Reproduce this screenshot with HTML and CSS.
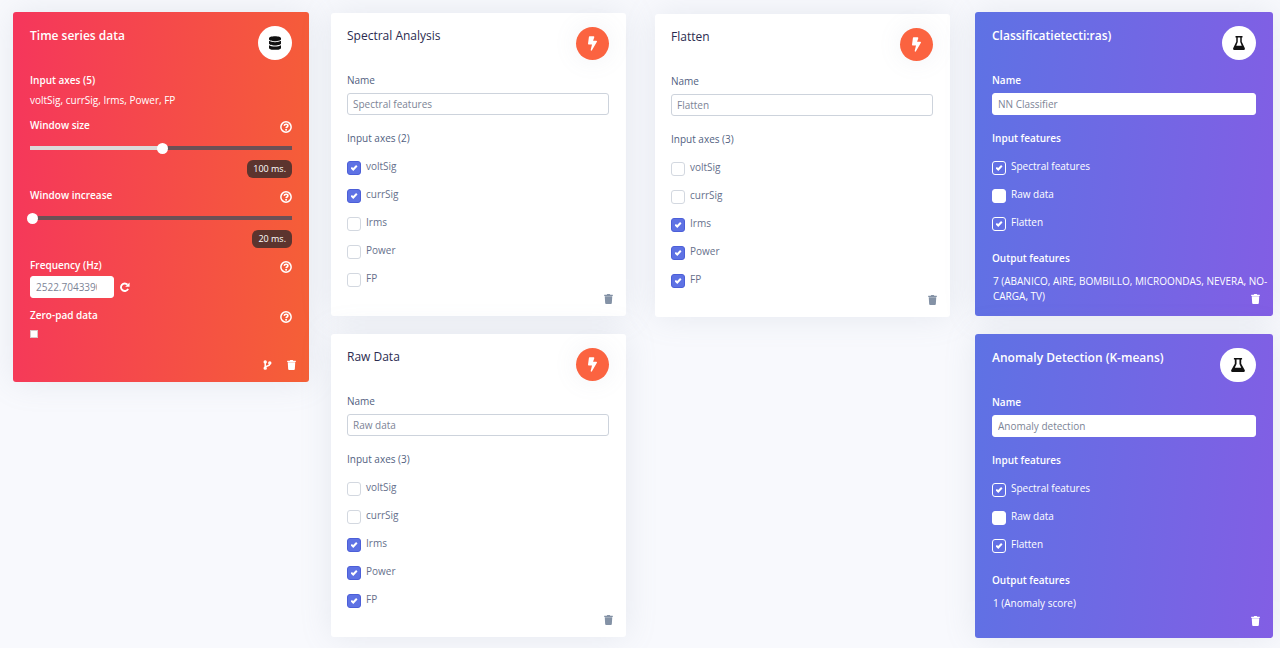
FILE: index.html
```html
<!DOCTYPE html>
<html lang="en">
<head>
<meta charset="utf-8">
<title>Impulse design</title>
<link rel="stylesheet" href="styles.css">
</head>
<body>
<svg class="sprite" aria-hidden="true">
  <symbol id="bolt" viewBox="0 0 320 512"><path d="M296 160H180.600l42.600-129.800C227.200 15 215.700 0 200 0H56C44 0 33.800 8.900 32.200 20.800l-32 240C-1.700 275.200 9.500 288 24 288h118.700L96.600 482.500c-3.600 15.200 8 29.500 23.300 29.500 8.400 0 16.400-4.400 20.800-12l176-304c9.300-15.900-2.200-36-20.700-36z"/></symbol>
  <symbol id="trash" viewBox="0 0 448 512"><path d="M432 32H312l-9.400-18.700A24 24 0 0 0 281.100 0H166.800a23.720 23.720 0 0 0-21.400 13.300L136 32H16A16 16 0 0 0 0 48v32a16 16 0 0 0 16 16h416a16 16 0 0 0 16-16V48a16 16 0 0 0-16-16zM32 110l21.200 357a48 48 0 0 0 47.900 45h245.800a48 48 0 0 0 47.900-45L416 110z"/></symbol>
  <symbol id="database" viewBox="0 0 448 512"><path d="M448 73.143v45.714C448 159.143 347.667 192 224 192S0 159.143 0 118.857V73.143C0 32.857 100.333 0 224 0s224 32.857 224 73.143zM448 176v102.857C448 319.143 347.667 352 224 352S0 319.143 0 278.857V176c48.125 33.143 136.208 48.572 224 48.572S399.874 209.143 448 176zm0 160v102.857C448 479.143 347.667 512 224 512S0 479.143 0 438.857V336c48.125 33.143 136.208 48.572 224 48.572S399.874 369.143 448 336z"/></symbol>
  <symbol id="flask" viewBox="0 0 24 28" preserveAspectRatio="none"><path fill-rule="evenodd" d="M5 0h14v3h-1.500v8.500l6 12.500C24.500 26.500 23 28 21 28H3c-2 0-3.500-1.500-2.500-4L6.500 11.500V3H5zM9.500 3v9l-3 7.500h11l-3-7.500V3z"/></symbol>
  <symbol id="help" viewBox="0 0 24 24"><g fill="none" stroke="currentColor"><circle cx="12" cy="12" r="10.300" stroke-width="3"/><path d="M8.300 9.500c.4-2 1.900-3 3.800-3 2.100 0 3.700 1.200 3.700 3.100 0 2.300-3.500 2.500-3.500 4.600" stroke-width="3.200"/></g><circle cx="12.200" cy="17.400" r="2"/></symbol>
  <symbol id="redo" viewBox="0 0 24 24"><path fill="none" stroke="currentColor" stroke-width="4.500" d="M19.500 16.500A9 9 0 1 1 18 6.500"/><path d="M23 1v10.500H12.500z"/></symbol>
  <symbol id="branch" viewBox="0 0 20 24"><g fill="none" stroke="currentColor" stroke-width="3.600"><circle cx="4.500" cy="4.500" r="2.300"/><circle cx="4.500" cy="19.500" r="2.300"/><circle cx="15.500" cy="7" r="2.300"/><path d="M4.500 7v10M15.500 9.500c0 5-6 4-10.500 6.500"/></g></symbol>
</svg>

<main class="board">
  <section class="column">
    <article class="card card-red">
      <header class="card-head"><h2 class="title">Time series data</h2><span class="badge badge-white"><svg class="icon-database"><use href="#database"/></svg></span></header>
      <h3 class="label">Input axes (5)</h3>
      <p class="axes">voltSig, currSig, Irms, Power, FP</p>
      <div class="label-row"><label class="label" for="window-size">Window size</label><button class="help" type="button" aria-label="Help"><svg><use href="#help"/></svg></button></div>
      <input class="slider" id="window-size" type="range" min="0" max="100" value="51" style="--fill:51%">
      <output class="pill" for="window-size">100 ms.</output>
      <div class="label-row"><label class="label" for="window-increase">Window increase</label><button class="help" type="button" aria-label="Help"><svg><use href="#help"/></svg></button></div>
      <input class="slider" id="window-increase" type="range" min="0" max="100" value="0" style="--fill:0%">
      <output class="pill" for="window-increase">20 ms.</output>
      <div class="label-row"><label class="label" for="frequency">Frequency (Hz)</label><button class="help" type="button" aria-label="Help"><svg><use href="#help"/></svg></button></div>
      <div class="frequency-row"><input class="field field-short" id="frequency" type="text" value="2522.7043390"><button class="redo" type="button" aria-label="Reset frequency"><svg><use href="#redo"/></svg></button></div>
      <div class="label-row"><label class="label" for="zero-pad">Zero-pad data</label><button class="help" type="button" aria-label="Help"><svg><use href="#help"/></svg></button></div>
      <input class="mini-check" id="zero-pad" type="checkbox">
      <div class="actions"><button type="button" aria-label="Create version"><svg><use href="#branch"/></svg></button><button type="button" aria-label="Delete"><svg><use href="#trash"/></svg></button></div>
    </article>
  </section>

  <section class="column column-dsp">
    <article class="card card-light">
      <header class="card-head"><h2 class="title">Spectral Analysis</h2><span class="badge badge-orange"><svg class="icon-bolt"><use href="#bolt"/></svg></span></header>
      <label class="label" for="spectral-name">Name</label>
      <input class="field" id="spectral-name" type="text" value="Spectral features">
      <h3 class="label">Input axes (2)</h3>
      <div class="checks">
        <label class="check"><input type="checkbox" checked><span>voltSig</span></label>
        <label class="check"><input type="checkbox" checked><span>currSig</span></label>
        <label class="check"><input type="checkbox"><span>Irms</span></label>
        <label class="check"><input type="checkbox"><span>Power</span></label>
        <label class="check"><input type="checkbox"><span>FP</span></label>
      </div>
      <div class="actions"><button type="button" aria-label="Delete"><svg><use href="#trash"/></svg></button></div>
    </article>
    <article class="card card-light">
      <header class="card-head"><h2 class="title">Raw Data</h2><span class="badge badge-orange"><svg class="icon-bolt"><use href="#bolt"/></svg></span></header>
      <label class="label" for="raw-name">Name</label>
      <input class="field" id="raw-name" type="text" value="Raw data">
      <h3 class="label">Input axes (3)</h3>
      <div class="checks">
        <label class="check"><input type="checkbox"><span>voltSig</span></label>
        <label class="check"><input type="checkbox"><span>currSig</span></label>
        <label class="check"><input type="checkbox" checked><span>Irms</span></label>
        <label class="check"><input type="checkbox" checked><span>Power</span></label>
        <label class="check"><input type="checkbox" checked><span>FP</span></label>
      </div>
      <div class="actions"><button type="button" aria-label="Delete"><svg><use href="#trash"/></svg></button></div>
    </article>
  </section>

  <section class="column column-flatten">
    <article class="card card-light">
      <header class="card-head"><h2 class="title">Flatten</h2><span class="badge badge-orange"><svg class="icon-bolt"><use href="#bolt"/></svg></span></header>
      <label class="label" for="flatten-name">Name</label>
      <input class="field" id="flatten-name" type="text" value="Flatten">
      <h3 class="label">Input axes (3)</h3>
      <div class="checks">
        <label class="check"><input type="checkbox"><span>voltSig</span></label>
        <label class="check"><input type="checkbox"><span>currSig</span></label>
        <label class="check"><input type="checkbox" checked><span>Irms</span></label>
        <label class="check"><input type="checkbox" checked><span>Power</span></label>
        <label class="check"><input type="checkbox" checked><span>FP</span></label>
      </div>
      <div class="actions"><button type="button" aria-label="Delete"><svg><use href="#trash"/></svg></button></div>
    </article>
  </section>

  <section class="column column-learn">
    <article class="card card-purple">
      <header class="card-head"><h2 class="title">Classificatietecti:ras)</h2><span class="badge badge-white"><svg class="icon-flask"><use href="#flask"/></svg></span></header>
      <label class="label" for="classifier-name">Name</label>
      <input class="field" id="classifier-name" type="text" value="NN Classifier">
      <h3 class="label">Input features</h3>
      <div class="checks">
        <label class="check"><input type="checkbox" checked><span>Spectral features</span></label>
        <label class="check"><input type="checkbox"><span>Raw data</span></label>
        <label class="check"><input type="checkbox" checked><span>Flatten</span></label>
      </div>
      <h3 class="label label-output">Output features</h3>
      <p class="outputs">7 (ABANICO, AIRE, BOMBILLO, MICROONDAS, NEVERA, NO-CARGA, TV)</p>
      <div class="actions"><button type="button" aria-label="Delete"><svg><use href="#trash"/></svg></button></div>
    </article>
    <article class="card card-purple">
      <header class="card-head"><h2 class="title">Anomaly Detection (K-means)</h2><span class="badge badge-white badge-wide"><svg class="icon-flask icon-flask-wide"><use href="#flask"/></svg></span></header>
      <label class="label" for="anomaly-name">Name</label>
      <input class="field" id="anomaly-name" type="text" value="Anomaly detection">
      <h3 class="label">Input features</h3>
      <div class="checks">
        <label class="check"><input type="checkbox" checked><span>Spectral features</span></label>
        <label class="check"><input type="checkbox"><span>Raw data</span></label>
        <label class="check"><input type="checkbox" checked><span>Flatten</span></label>
      </div>
      <h3 class="label label-output">Output features</h3>
      <p class="outputs">1 (Anomaly score)</p>
      <div class="actions"><button type="button" aria-label="Delete"><svg><use href="#trash"/></svg></button></div>
    </article>
  </section>
</main>
</body>
</html>
```
FILE: styles.css
```css
* { box-sizing: border-box; }

body {
  margin: 0;
  background: #f8f9fd;
  color: #525f7f;
  font-family: "Open Sans", "Noto Sans", sans-serif;
  font-size: 10px;
  line-height: 14px;
}

h2, h3, p { margin: 0; }
button { padding: 0; border: 0; background: none; color: inherit; line-height: 0; }
svg { display: block; fill: currentColor; }
.sprite { position: absolute; width: 0; height: 0; }

.board {
  display: grid;
  grid-template-columns: 296fr 317fr 324fr 323fr;
  align-items: start;
  padding: 12px 7px 10px 13px;
}
.column { display: flex; flex-direction: column; gap: 18px; }
.column-dsp { padding: 1px 0 0 22px; }
.column-flatten { padding: 2px 0 0 29px; }
.column-learn { padding-left: 25px; }

.card {
  position: relative;
  display: flex;
  flex-direction: column;
  padding: 14px 17px 22px 16px;
  border-radius: 3px;
  box-shadow: 0 0 32px rgba(136, 152, 170, 0.16);
}
.card-light { background: #fff; }
.card-red {
  padding: 14px 17px 44px;
  background: linear-gradient(95deg, #f5365c, #f56036);
  color: #fff;
}
.card-purple {
  min-height: 304px;
  padding: 14px 17px 12px;
  background: linear-gradient(95deg, #5e72e4, #825ee4);
  color: #fff;
}

.card-head { display: flex; justify-content: space-between; align-items: flex-start; height: 34px; margin-bottom: 13px; }
.card-light .card-head { height: 33px; }
.title { font-size: 12px; line-height: 20px; font-weight: 600; }
.card-light .title { color: #2b2b50; line-height: 18px; font-weight: 500; }

.badge {
  display: grid;
  place-items: center;
  flex: none;
  width: 34px;
  height: 34px;
  border-radius: 17px;
}
.badge-white { background: #fff; color: #111; }
.badge-orange { width: 33px; height: 33px; background: #fb6340; color: #fff; box-shadow: 0 0 24px rgba(136, 152, 170, 0.12); }
.badge-wide { width: 36px; }
.icon-database { width: 12px; height: 14px; }
.icon-bolt { width: 9px; height: 15px; }
.icon-flask { width: 12px; height: 14px; }
.icon-flask-wide { width: 14px; }

.label { font-size: 10px; line-height: 14px; font-weight: 600; }
.card-light .label { font-weight: 500; }
.axes { margin: 6px 0 11px; }

.field {
  width: 100%;
  height: 22px;
  margin: 6px 0 16px;
  padding: 0 5px;
  border: 1px solid #cdd3dc;
  border-radius: 3px;
  background: #fff;
  color: #7c8496;
  font: 10px/14px "Open Sans", "Noto Sans", sans-serif;
}
.card-purple .field, .card-red .field { border-color: #fff; }

.checks { display: grid; grid-auto-rows: 28px; margin-top: 9px; }
.check { display: flex; align-items: center; gap: 5px; }
.check span { padding-bottom: 4px; }
.card-light .check { color: #66708c; }
.check input {
  appearance: none;
  display: grid;
  place-items: center;
  width: 14px;
  height: 14px;
  margin: 0;
  border: 1px solid #d3d8e0;
  border-radius: 3px;
  background: #fff;
}
.check input:checked { border-color: #4c5fd8; background: #5e72e4; }
.card-purple .check input { border-color: #fff; }
.card-purple .check input:checked { background: transparent; }
.check input:checked::after {
  content: "";
  width: 7px;
  height: 6px;
  background: #fff;
  clip-path: polygon(0 54%, 20% 32%, 38% 52%, 80% 2%, 100% 24%, 40% 98%);
}

.label-output { margin-top: 13px; }
.outputs { margin: 9px -14px 0 1px; line-height: 15px; }

.label-row { display: flex; justify-content: space-between; align-items: flex-start; height: 15px; }
.help { padding-top: 3px; }
.help svg { width: 12px; height: 12px; }

.slider {
  appearance: none;
  width: calc(100% + 3px);
  height: 12px;
  margin: 9px 0 6px -3px;
  background: transparent;
}
.slider::-webkit-slider-runnable-track {
  height: 11px;
  background: linear-gradient(90deg, #dcd9d9 var(--fill), #6b5055 var(--fill)) right center / calc(100% - 3px) 4px no-repeat;
}
.slider::-webkit-slider-thumb {
  appearance: none;
  width: 11px;
  height: 11px;
  border-radius: 50%;
  background: #fff;
}
.pill {
  align-self: flex-end;
  margin-bottom: 10px;
  padding: 2px 6px;
  border-radius: 6px;
  background: #5c342e;
  font-size: 9px;
  line-height: 14px;
  font-weight: 500;
}

.frequency-row { display: flex; align-items: center; gap: 6px; margin: 3px 0 10px; }
.frequency-row .field-short { width: 84px; margin: 0; padding: 0 16px 0 5px; }
.redo svg { width: 10px; height: 10px; }
.mini-check { appearance: none; width: 8px; height: 8px; margin: 7px 0 0; border: 1px solid #d8c8c8; background: #fff; }

.actions { position: absolute; right: 13px; bottom: 12px; display: flex; gap: 15px; }
.actions svg { width: 9px; height: 10px; }
.card-light .actions { color: #8492a6; }
```
